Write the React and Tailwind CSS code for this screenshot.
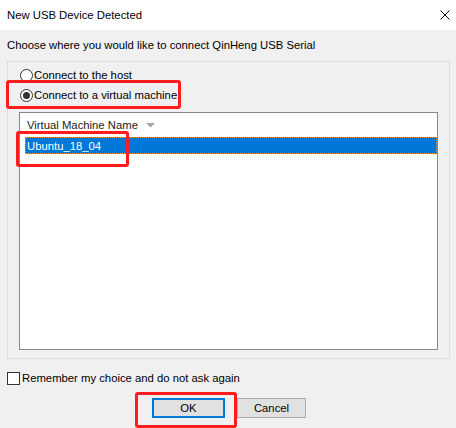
import React from "react";

// ── Small Win32-ish controls ──────────────────────────────────
function Radio({ checked, label }) {
  return (
    <div className="flex items-center h-[14px]">
      <span className="w-[13px] h-[13px] rounded-full border border-[#333333] bg-white flex items-center justify-center">
        {checked && <span className="w-[7px] h-[7px] rounded-full bg-[#333333]" />}
      </span>
      <span className="ml-[1px] text-[11.3px] leading-[14px] text-black">{label}</span>
    </div>
  );
}

function Btn({ focused, children }) {
  return (
    <div
      className={`h-[20px] flex items-center justify-center bg-[#e1e1e1] text-[11.3px] text-black
        ${focused ? "w-[73px] border-2 border-[#0078d7]" : "w-[69px] border border-[#adadad]"}`}
    >
      {children}
    </div>
  );
}

function RedBox({ className }) {
  return <div className={`absolute border-[3px] border-[#ff1c1c] rounded-[3px] ${className}`} />;
}

export default function App() {
  return (
    <div
      className="relative w-[456px] h-[428px] bg-[#f0f0f0] overflow-hidden text-black"
      style={{ fontFamily: '"Liberation Sans", Arial, sans-serif' }}
    >
      {/* Title bar */}
      <div className="h-[30px] bg-white flex items-center justify-between pl-[7px] pr-[6px]">
        <span className="text-[11.3px] leading-[14px]">New USB Device Detected</span>
        <svg width="10" height="10" viewBox="0 0 10 10" className="mt-[-1px]">
          <path d="M0.5 0.5 L9.5 9.5 M9.5 0.5 L0.5 9.5" stroke="#000" strokeWidth="1" fill="none" />
        </svg>
      </div>

      {/* Prompt */}
      <div className="pl-[7px] mt-[8px] text-[11.3px] leading-[14px]">
        Choose where you would like to connect QinHeng USB Serial
      </div>

      {/* Group box */}
      <div className="ml-[7px] mt-[9px] w-[443px] h-[298px] border border-[#dcdcdc] flex flex-col">
        <div className="pl-[12px] pt-[6px] flex flex-col gap-[6px]">
          <Radio label="Connect to the host" />
          <Radio checked label="Connect to a virtual machine" />
        </div>

        {/* List view */}
        <div className="ml-[11px] mt-[10px] w-[419px] h-[238px] border border-[#828790] bg-white flex flex-col">
          <div className="h-[24px] flex items-center pl-[7px]">
            <span className="text-[11.3px] leading-[14px] text-[#1a1a1a]">Virtual Machine Name</span>
            <svg width="9" height="5" viewBox="0 0 9 5" className="ml-[8px]">
              <path d="M0 0 H9 L4.5 4.5 Z" fill="#a5a5a5" />
            </svg>
          </div>
          <div className="ml-[5px] h-[17px] bg-[#0078d7] border border-dotted border-[#f59a3c] flex items-center pl-[1px]">
            <span className="text-[11.3px] leading-[14px] text-white">Ubuntu_18_04</span>
          </div>
        </div>
      </div>

      {/* Remember checkbox */}
      <div className="ml-[7px] mt-[12px] flex items-center">
        <span className="w-[13px] h-[13px] border border-[#333333] bg-white" />
        <span className="ml-[2px] text-[11.3px] leading-[14px]">Remember my choice and do not ask again</span>
      </div>

      {/* Buttons */}
      <div className="mt-[13px] ml-[152px] flex items-center gap-[12px]">
        <Btn focused>OK</Btn>
        <Btn>Cancel</Btn>
      </div>

      {/* Annotation boxes */}
      <RedBox className="left-[6px] top-[80px] w-[175px] h-[29px]" />
      <RedBox className="left-[16px] top-[131px] w-[113px] h-[36px]" />
      <RedBox className="left-[135px] top-[392px] w-[102px] h-[36px]" />
    </div>
  );
}
